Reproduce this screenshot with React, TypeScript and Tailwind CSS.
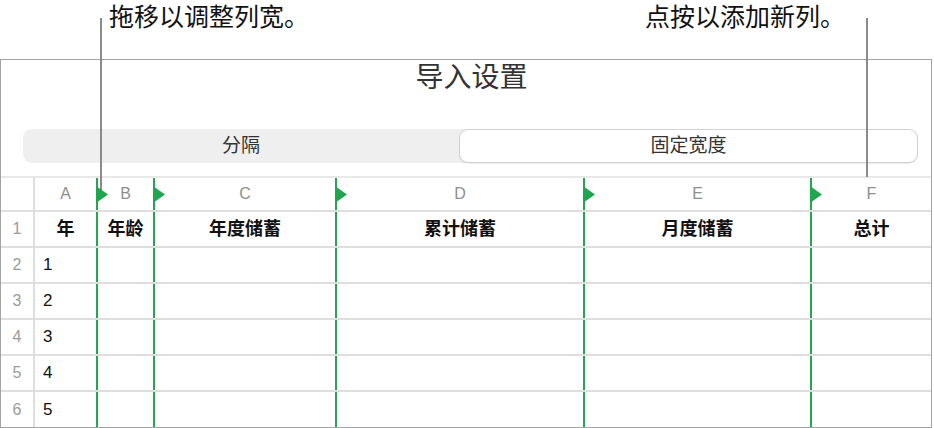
import React from 'react';

type Column = {
  letter: string;
  title: string;
  width: string;
  edge: string;
  marker: boolean;
};

const columns: Column[] = [
  { letter: 'A', title: '年', width: 'w-[63px]', edge: 'border-l-2 border-[#dedede]', marker: false },
  { letter: 'B', title: '年龄', width: 'w-[57px]', edge: 'border-l-2 border-[#22a850]', marker: true },
  { letter: 'C', title: '年度储蓄', width: 'w-[182px]', edge: 'border-l-2 border-[#22a850]', marker: true },
  { letter: 'D', title: '累计储蓄', width: 'w-[248px]', edge: 'border-l-2 border-[#22a850]', marker: true },
  { letter: 'E', title: '月度储蓄', width: 'w-[227px]', edge: 'border-l-2 border-[#22a850]', marker: true },
  { letter: 'F', title: '总计', width: 'flex-1', edge: 'border-l-2 border-[#22a850]', marker: true },
];

const values = ['1', '2', '3', '4', '5'];

const Marker: React.FC = () => (
  <svg className="absolute -left-[2px] top-[8px]" width="12" height="17" viewBox="0 0 12 17">
    <polygon points="0,0 12,8.5 0,17" fill="#1fa64e" />
  </svg>
);

const Callouts: React.FC = () => (
  <>
    <div className="flex h-[59px] justify-between text-[25px] leading-[35px] text-[#111]">
      <span className="pl-[109px]">拖移以调整列宽。</span>
      <span className="pr-[89px]">点按以添加新列。</span>
    </div>
    <div className="absolute left-[100px] top-[18px] h-[172px] w-[2px] bg-[#8a8a8a]" />
    <div className="absolute left-[866px] top-[18px] h-[159px] w-[2px] bg-[#8a8a8a]" />
  </>
);

const SegmentedControl: React.FC = () => (
  <div className="ml-[22px] mr-[13px] mt-[33px] flex h-[34px] rounded-[9px] bg-[#efefef] text-[19px] text-[#333]">
    <div className="flex w-[436px] items-center justify-center">分隔</div>
    <div className="flex flex-1 items-center justify-center rounded-[9px] border border-[#d2d2d2] bg-white shadow-[0_1px_1px_rgba(0,0,0,0.08)]">
      固定宽度
    </div>
  </div>
);

const Sheet: React.FC = () => (
  <div className="flex flex-1 flex-col">
    {/* column letters */}
    <div className="flex h-[34px] border-b-2 border-[#dedede]">
      <div className="w-[32px]" />
      {columns.map((col) => (
        <div
          key={col.letter}
          className={`${col.width} ${col.edge} relative flex items-center justify-center text-[16px] text-[#8e8e8e]`}
        >
          {col.marker && <Marker />}
          {col.letter}
        </div>
      ))}
    </div>

    {/* header row */}
    <div className="flex h-[36px] border-b-2 border-[#dedede]">
      <div className="flex w-[32px] items-center justify-center text-[16px] text-[#9b9b9b]">1</div>
      {columns.map((col) => (
        <div
          key={col.letter}
          className={`${col.width} ${col.edge} flex items-center justify-center text-[18px] font-bold text-[#111]`}
        >
          {col.title}
        </div>
      ))}
    </div>

    {values.map((v, i) => {
      const last = i === values.length - 1;
      return (
        <div
          key={v}
          className={last ? 'flex flex-1' : 'flex h-[36px] border-b-2 border-[#dedede]'}
        >
          <div className="flex w-[32px] items-center justify-center text-[16px] text-[#9b9b9b]">{i + 2}</div>
          {columns.map((col, c) => (
            <div
              key={col.letter}
              className={`${col.width} ${col.edge} flex items-center pl-[8px] text-[17px] text-[#111]`}
            >
              {c === 0 ? v : ''}
            </div>
          ))}
        </div>
      );
    })}
  </div>
);

const App: React.FC = () => {
  return (
    <div className="relative h-[428px] w-[934px] overflow-hidden bg-white font-['Liberation_Sans','Noto_Sans_CJK_SC',sans-serif]">
      <Callouts />
      <div className="flex h-[369px] w-[932px] flex-col border border-[#a3a3a3] bg-white">
        <div className="h-[36px] pl-[11px] text-center text-[28px] leading-[36px] text-[#333]">导入设置</div>
        <SegmentedControl />
        <div className="mt-[13px] h-[2px] bg-[#e8e8e8]" />
        <Sheet />
      </div>
    </div>
  );
};

export default App;
